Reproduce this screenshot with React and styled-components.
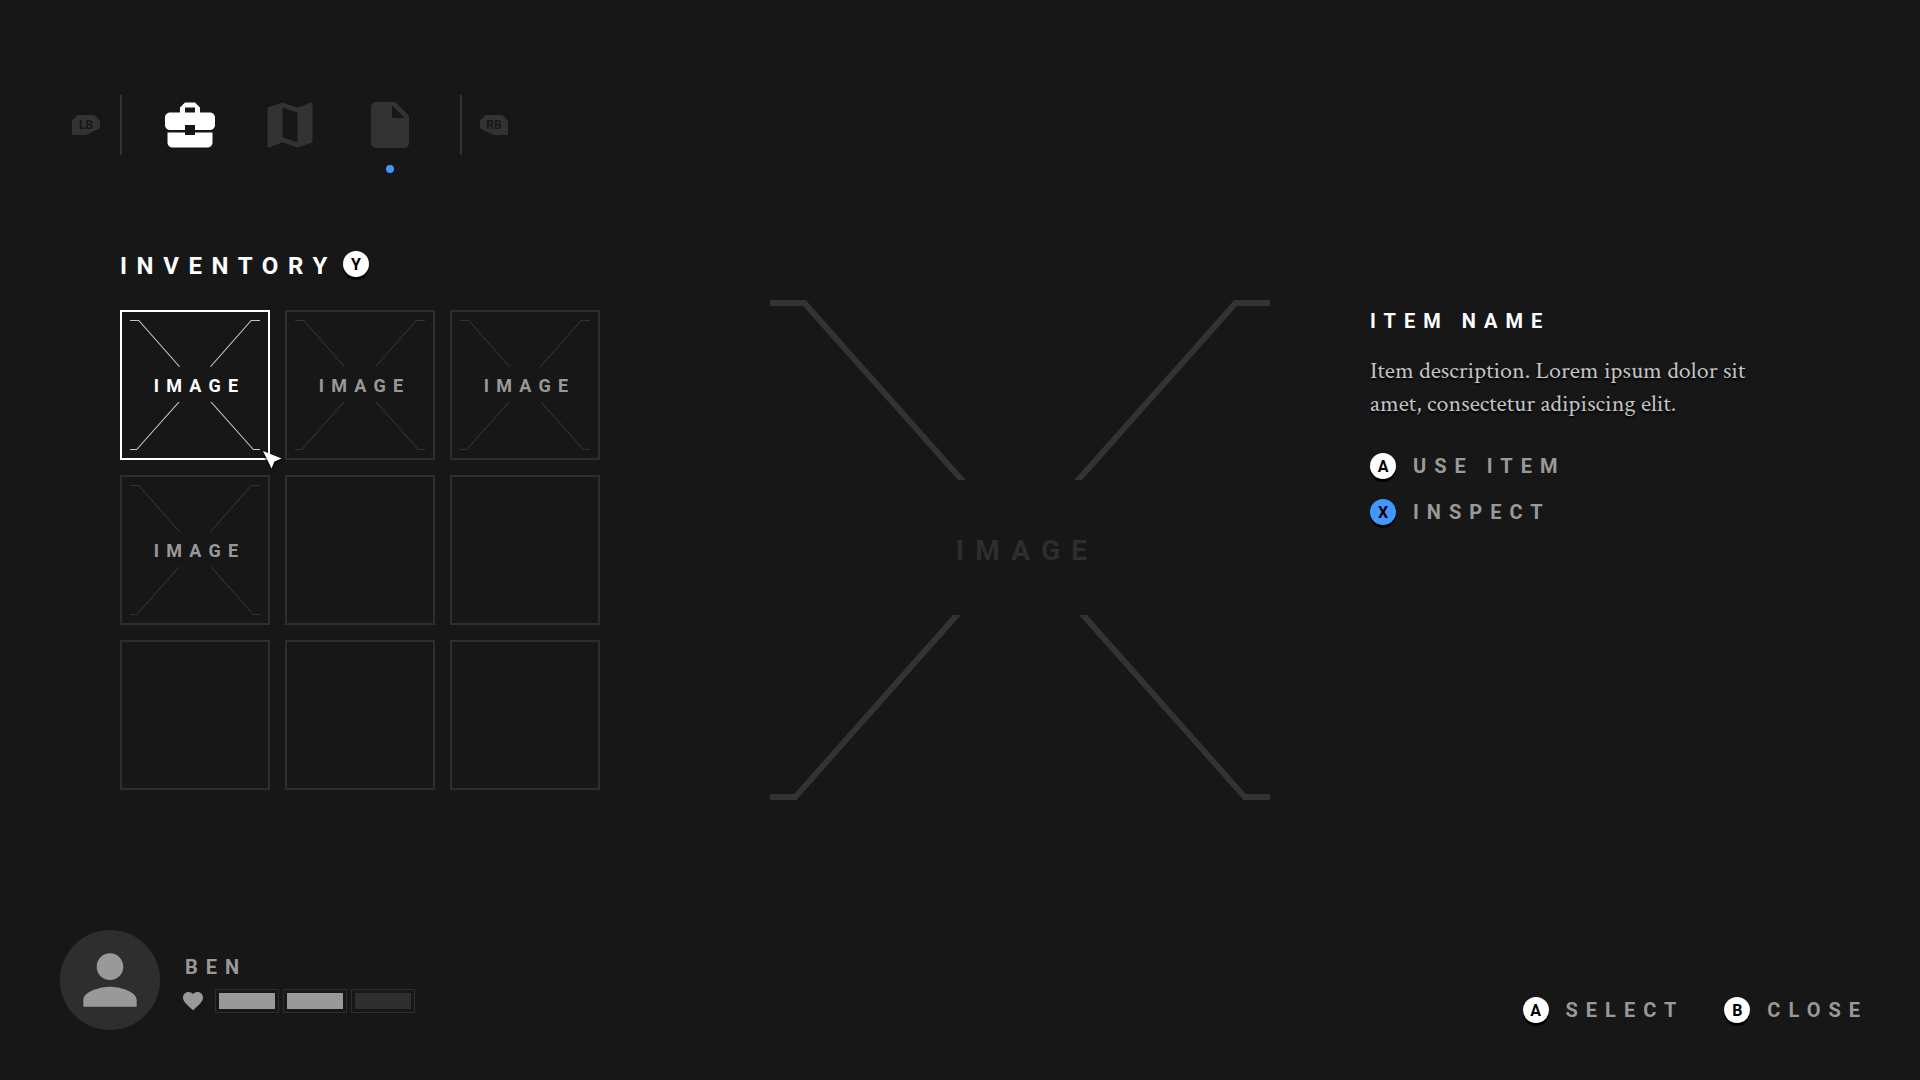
import React from "react";
import styled, { createGlobalStyle } from "styled-components";
import { MdBusinessCenter, MdMap, MdPerson, MdFavorite } from "react-icons/md";

const color = {
  bg: "#171717",
  line: "#2e2e2e",
  icon: "#333333",
  muted: "#999999",
  body: "#c4c4c4",
  white: "#ffffff",
  blue: "#4297ff",
};

const GlobalStyle = createGlobalStyle`
  *, *::before, *::after { box-sizing: border-box; }
  body {
    margin: 0;
    background: ${color.bg};
    color: ${color.white};
    font-family: Roboto, sans-serif;
  }
  h1, h2, p, ul { margin: 0; padding: 0; }
  ul { list-style: none; }
  button {
    padding: 0;
    border: 0;
    background: none;
    color: inherit;
    font: inherit;
    cursor: pointer;
  }
`;

const Screen = styled.div`
  display: flex;
  flex-direction: column;
  min-height: 100vh;
  padding: 95px 52px 50px 60px;
`;

const TopBar = styled.nav`
  display: flex;
  align-items: center;
  gap: 18px;
  padding-left: 12px;
`;

const Tabs = styled.ul`
  display: flex;
  gap: 40px;
  margin-left: 2px;
  padding: 0 40px 0 38px;
  border: solid ${color.icon};
  border-width: 0 2px;
`;

const Tab = styled.button`
  position: relative;
  display: block;
  width: 60px;
  height: 60px;
  color: ${({ $active }) => ($active ? color.white : color.icon)};

  svg {
    display: block;
  }
`;

const NewDot = styled.span`
  position: absolute;
  top: 70px;
  left: 26px;
  width: 8px;
  height: 8px;
  border-radius: 50%;
  background: ${color.blue};
`;

const Bumper = styled.button`
  display: grid;
  place-items: center;
  width: 28px;
  height: 20px;
  color: ${color.bg};
  font-size: 12px;
  font-weight: 700;
  line-height: 20px;

  > * {
    grid-area: 1 / 1;
  }

  svg {
    transform: ${({ $flip }) => ($flip ? "scaleX(-1)" : "none")};
    fill: ${color.icon};
    stroke: ${color.icon};
    stroke-width: 2;
    stroke-linejoin: round;
  }

  span {
    position: relative;
  }
`;

const Main = styled.main`
  display: grid;
  grid-template-columns: 550px minmax(500px, 1fr) 438px;
  align-items: start;
  padding: 90px 60px 0;
`;

const Inventory = styled.section`
  display: flex;
  flex-direction: column;
  gap: 30px;
  padding-top: 5px;
`;

const Key = styled.kbd`
  display: block;
  width: 26px;
  height: 26px;
  border-radius: 50%;
  background: ${({ $blue }) => ($blue ? color.blue : color.white)};
  box-shadow: 0 3px 0 #000000;
  color: #000000;
  font-family: Roboto, sans-serif;
  font-size: 16px;
  font-weight: 700;
  line-height: 28px;
  letter-spacing: 0;
  text-align: center;
`;

const TitleRow = styled.div`
  display: flex;
  align-items: flex-start;
  gap: 6px;
  height: 30px;

  ${Key} {
    margin-top: 1px;
  }
`;

const Title = styled.h1`
  font-size: 24px;
  font-weight: 700;
  line-height: 32px;
  letter-spacing: 0.4em;
`;

const Slots = styled.ul`
  display: grid;
  grid-template-columns: repeat(3, 150px);
  gap: 15px;
`;

const Slot = styled.button`
  position: relative;
  display: grid;
  place-items: center;
  width: 150px;
  height: 150px;
  border: 2px solid ${({ $selected }) => ($selected ? color.white : color.line)};
  color: ${({ $selected }) => ($selected ? color.white : color.muted)};
`;

const Picture = styled.div`
  display: grid;
  place-items: center;
  width: ${({ $size }) => $size}px;
  height: ${({ $size }) => $size}px;
  line-height: 1;

  > * {
    grid-area: 1 / 1;
  }

  svg {
    display: block;
    width: 100%;
    height: 100%;
    fill: ${({ $tone }) => $tone};
  }
`;

const PictureLabel = styled.span`
  padding: 2px 0 0 0.5em;
  color: ${({ $tone }) => $tone};
  font-size: ${({ $size }) => $size}px;
  font-weight: 700;
  letter-spacing: 0.4em;
`;

const Pointer = styled.svg`
  position: absolute;
  top: 138px;
  left: 140px;
  width: 24px;
  height: 24px;
  overflow: visible;
  fill: ${color.white};
  filter: drop-shadow(0 2px 1px #000000);
  pointer-events: none;
`;

const Preview = styled.section`
  display: flex;
  justify-content: center;
  padding-top: 55px;
`;

const Details = styled.section`
  display: flex;
  flex-direction: column;
  padding-top: 61px;
`;

const ItemName = styled.h2`
  font-size: 20px;
  font-weight: 700;
  line-height: 30px;
  letter-spacing: 0.4em;
`;

const Description = styled.p`
  max-width: 400px;
  margin-top: 18px;
  color: ${color.body};
  font-family: "Crimson Text", "Liberation Serif", serif;
  font-size: 24px;
  line-height: 33px;
  text-shadow: 0 2px 2px #000000;
`;

const Actions = styled.div`
  display: flex;
  flex-direction: column;
  align-items: flex-start;
  gap: 20px;
  margin-top: 33px;
`;

const Action = styled.button`
  display: flex;
  align-items: center;
  gap: 17px;
  color: ${color.muted};
  font-size: 20px;
  font-weight: 700;
  line-height: 26px;
  letter-spacing: 0.4em;
`;

const Footer = styled.footer`
  display: flex;
  align-items: flex-end;
  justify-content: space-between;
  margin-top: auto;
`;

const Player = styled.div`
  display: flex;
  align-items: center;
  gap: 21px;
`;

const Avatar = styled.div`
  display: grid;
  place-items: center;
  width: 100px;
  height: 100px;
  border-radius: 50%;
  background: ${color.line};
  color: ${color.muted};
`;

const Status = styled.div`
  display: flex;
  flex-direction: column;
  gap: 9px;
  padding-top: 7px;
  color: ${color.muted};
`;

const PlayerName = styled.span`
  padding-left: 4px;
  font-size: 20px;
  font-weight: 700;
  line-height: 26px;
  letter-spacing: 0.4em;
`;

const Health = styled.div`
  display: flex;
  align-items: center;
  gap: 10px;
`;

const HealthCells = styled.div`
  display: flex;
  gap: 4px;
`;

const HealthCell = styled.span`
  width: 64px;
  height: 24px;
  padding: 3px;
  border: 1px solid ${color.line};
  background: ${({ $full }) => ($full ? color.muted : color.line)} content-box;
`;

const Hints = styled.div`
  display: flex;
  gap: 40px;
  padding-bottom: 7px;
`;

function PictureFrame({ stroke }) {
  const t = stroke;
  const top = `M0 0H${33 + 0.45 * t}L${188 + 1.3 * t} 180H188L33 ${t}H0Z`;
  const bottom = `M0 500H26.5L191 315H${191 - 1.36 * t}L${26.5 - 0.4 * t} ${500 - t}H0Z`;
  return (
    <svg viewBox="0 0 500 500" aria-hidden="true">
      <path d={top + bottom} />
      <path d={top + bottom} transform="translate(500 0) scale(-1 1)" />
    </svg>
  );
}

function DocumentIcon() {
  return (
    <svg width="60" height="60" viewBox="0 0 60 60" fill="currentColor" aria-hidden="true">
      <path
        fillRule="evenodd"
        d="M16 7H35.3L49 20.7V48a5 5 0 0 1-5 5H16a5 5 0 0 1-5-5V12a5 5 0 0 1 5-5ZM32 10.5V23H44.7Z"
      />
    </svg>
  );
}

function BumperKey({ label, flip }) {
  return (
    <Bumper type="button" $flip={flip}>
      <svg width="28" height="20" viewBox="0 0 28 20" aria-hidden="true">
        <path d="M1 6L6 1H22L27 6V12.5L13.5 19H1Z" />
      </svg>
      <span>{label}</span>
    </Bumper>
  );
}

const items = [
  { id: 1, filled: true, selected: true },
  { id: 2, filled: true },
  { id: 3, filled: true },
  { id: 4, filled: true },
  { id: 5 },
  { id: 6 },
  { id: 7 },
  { id: 8 },
  { id: 9 },
];

export default function App() {
  return (
    <>
      <GlobalStyle />
      <Screen>
        <TopBar>
          <BumperKey label="LB" />
          <Tabs>
            <li>
              <Tab type="button" $active aria-label="Inventory">
                <MdBusinessCenter size={60} />
              </Tab>
            </li>
            <li>
              <Tab type="button" aria-label="Map">
                <MdMap size={60} />
              </Tab>
            </li>
            <li>
              <Tab type="button" aria-label="Documents">
                <DocumentIcon />
                <NewDot />
              </Tab>
            </li>
          </Tabs>
          <BumperKey label="RB" flip />
        </TopBar>

        <Main>
          <Inventory>
            <TitleRow>
              <Title>INVENTORY</Title>
              <Key>Y</Key>
            </TitleRow>
            <Slots>
              {items.map((item) => (
                <li key={item.id}>
                  <Slot type="button" $selected={item.selected} aria-label={item.filled ? undefined : "Empty slot"}>
                    {item.filled && (
                      <Picture $size={130} $tone={item.selected ? color.body : color.icon}>
                        <PictureFrame stroke={4} />
                        <PictureLabel $size={18}>IMAGE</PictureLabel>
                      </Picture>
                    )}
                    {item.selected && (
                      <Pointer viewBox="0 0 24 24" aria-hidden="true">
                        <path d="M1 1L19.5 8.5L12.5 11.5L9.5 18.5Z" />
                      </Pointer>
                    )}
                  </Slot>
                </li>
              ))}
            </Slots>
          </Inventory>

          <Preview>
            <Picture $size={500} $tone={color.icon}>
              <PictureFrame stroke={6} />
              <PictureLabel $size={28} $tone={color.line}>
                IMAGE
              </PictureLabel>
            </Picture>
          </Preview>

          <Details>
            <ItemName>ITEM NAME</ItemName>
            <Description>Item description. Lorem ipsum dolor sit amet, consectetur adipiscing elit.</Description>
            <Actions>
              <Action type="button">
                <Key>A</Key>
                USE ITEM
              </Action>
              <Action type="button">
                <Key $blue>X</Key>
                INSPECT
              </Action>
            </Actions>
          </Details>
        </Main>

        <Footer>
          <Player>
            <Avatar>
              <MdPerson size={80} />
            </Avatar>
            <Status>
              <PlayerName>BEN</PlayerName>
              <Health>
                <MdFavorite size={24} />
                <HealthCells role="meter" aria-label="Health" aria-valuemin={0} aria-valuemax={3} aria-valuenow={2}>
                  <HealthCell $full />
                  <HealthCell $full />
                  <HealthCell />
                </HealthCells>
              </Health>
            </Status>
          </Player>
          <Hints>
            <Action type="button">
              <Key>A</Key>
              SELECT
            </Action>
            <Action type="button">
              <Key>B</Key>
              CLOSE
            </Action>
          </Hints>
        </Footer>
      </Screen>
    </>
  );
}
